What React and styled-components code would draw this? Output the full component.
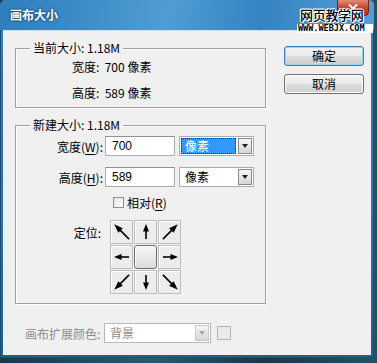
import React from "react";
import styled, { createGlobalStyle } from "styled-components";

const GlobalStyle = createGlobalStyle`
  html, body {
    margin: 0;
    padding: 0;
    background: #1c4452;
  }
  body {
    font-family: "Liberation Sans", "Noto Sans CJK SC", sans-serif;
    font-size: 12px;
    color: #000;
  }
`;

// 바깥 배경 + 창
const Screen = styled.div`
  position: relative;
  width: 377px;
  height: 363px;
  overflow: hidden;
  background: linear-gradient(90deg, #17394a, #2a5a6a 40%, #173845 70%, #25525e);
`;

const Frame = styled.div`
  width: 374px;
  height: 358px;
  box-sizing: border-box;
  padding: 0 3px 3px;
  border-radius: 6px 6px 0 0;
  background: linear-gradient(180deg, #4f9ad0 0%, #2f7dbb 8%, #2a74ad 60%, #1e5f92 100%);
  display: flex;
  flex-direction: column;
  box-shadow: inset 0 0 0 1px #1b4f7a;
`;

const TitleBar = styled.div`
  height: 29px;
  display: flex;
  align-items: center;
  padding-left: 7px;
  background: linear-gradient(100deg, #2f7dbb 0%, #4f9dd3 45%, #3583c0 70%, #559fd4 100%);
  border-radius: 5px 5px 0 0;
  margin: 0 -3px;
  padding-bottom: 1px;
`;

const Title = styled.span`
  font-family: "Noto Sans CJK SC", sans-serif;
  font-weight: 700;
  font-size: 12px;
  color: #fff;
  text-shadow: 0 0 3px #1a4c7a, 0 0 2px #1a4c7a;
  padding-left: 3px;
`;

const CloseButton = styled.div`
  position: absolute;
  left: 337px;
  top: -3px;
  width: 32px;
  height: 19px;
  border-radius: 0 0 4px 4px;
  background: linear-gradient(180deg, #e5a08f, #c9472c 55%, #b83018);
  border: 1px solid #6d2a1e;
  box-sizing: border-box;
  display: flex;
  align-items: center;
  justify-content: center;
  padding-top: 3px;
`;

const Watermark = styled.div`
  position: absolute;
  left: 297px;
  top: 7px;
  display: flex;
  flex-direction: column;
  align-items: flex-start;
`;

const WatermarkTitle = styled.span`
  font-family: "Noto Sans CJK SC", sans-serif;
  font-size: 13px;
  font-weight: 500;
  line-height: 16px;
  color: #000;
  padding-left: 3px;
  letter-spacing: -0.3px;
  text-shadow: 1px 0 0 #fff, -1px 0 0 #fff, 0 1px 0 #fff, 0 -1px 0 #fff, 1px 1px 0 #fff, -1px -1px 0 #fff;
`;

const WatermarkUrl = styled.span`
  font-family: "DejaVu Sans Mono", monospace;
  font-weight: 700;
  font-size: 8.5px;
  line-height: 9px;
  background: #fff;
  color: #000;
  padding: 0 3px 0 1px;
  width: 72px;
  margin-top: 1px;
`;

const Body = styled.div`
  flex: 1;
  background: #f0f0f0;
  display: flex;
  flex-direction: column;
  padding: 10px 0 0 12px;
  border-top: 1px solid #cfe0ee;
`;

const MainRow = styled.div`
  display: flex;
  align-items: flex-start;
`;

const LeftColumn = styled.div`
  width: 251px;
  display: flex;
  flex-direction: column;
  gap: 10px;
`;

const RightColumn = styled.div`
  margin-left: 18px;
  padding-top: 5px;
  display: flex;
  flex-direction: column;
  gap: 8px;
`;

// 그룹 박스
const Group = styled.fieldset`
  margin: 0;
  padding: 0;
  border: 1px solid #a0a0a0;
  box-shadow: 1px 1px 0 #fff, inset 1px 1px 0 #fff;
  min-width: 0;
`;

const GroupContent = styled.div`
  padding: ${(p) => p.$pad};
`;

const Legend = styled.legend`
  margin-left: 14px;
  padding: 0 3px;
  line-height: 14px;
  font-family: "Noto Sans CJK SC", sans-serif;
  font-size: 12px;
`;

const InfoLine = styled.div`
  line-height: 14px;
  white-space: pre;
  font-family: "Noto Sans CJK SC", sans-serif;
  & + & {
    margin-top: 12px;
  }
`;

const FieldRow = styled.div`
  display: flex;
  align-items: center;
  height: 20px;
  & + & {
    margin-top: 11px;
  }
`;

const FieldLabel = styled.label`
  width: ${(p) => p.$w}px;
  margin-right: ${(p) => p.$gap}px;
  padding-top: ${(p) => p.$top || 0}px;
  text-align: ${(p) => p.$align || "right"};
  color: ${(p) => (p.$disabled ? "#8d8d8d" : "#000")};
  font-family: "Noto Sans CJK SC", sans-serif;
  white-space: nowrap;
`;

const Key = styled.u`
  text-underline-offset: 2px;
`;

const TextInput = styled.div`
  width: 70px;
  height: 20px;
  box-sizing: border-box;
  border: 1px solid #abadb3;
  border-top-color: #8e9197;
  background: #fff;
  padding-left: 6px;
  line-height: 18px;
`;

const Select = styled.div`
  width: ${(p) => p.$w}px;
  height: 20px;
  margin-left: ${(p) => p.$ml}px;
  box-sizing: border-box;
  border: 1px solid ${(p) => (p.$disabled ? "#b8b8b8" : "#abadb3")};
  background: #fff;
  display: flex;
  align-items: center;
  padding: 1px;
  gap: 2px;
`;

const SelectValue = styled.div`
  flex: 1;
  height: 100%;
  box-sizing: border-box;
  padding-left: 4px;
  line-height: 16px;
  font-family: "Noto Sans CJK SC", sans-serif;
  background: ${(p) => (p.$active ? "#3399ff" : "transparent")};
  color: ${(p) => (p.$active ? "#fff" : p.$disabled ? "#8d8d8d" : "#000")};
  outline: ${(p) => (p.$active ? "1px dotted #0c2a55" : "none")};
  outline-offset: -1px;
`;

const DropButton = styled.div`
  width: 14px;
  height: 16px;
  box-sizing: border-box;
  border: 1px solid ${(p) => (p.$disabled ? "#c9c9c9" : "#8a8a8a")};
  background: linear-gradient(180deg, #f6f6f6, #d6d6d6);
  display: flex;
  align-items: center;
  justify-content: center;
  &::after {
    content: "";
    border-left: 3.5px solid transparent;
    border-right: 3.5px solid transparent;
    border-top: 4px solid ${(p) => (p.$disabled ? "#a8a8a8" : "#222")};
  }
`;

const CheckRow = styled.div`
  display: flex;
  align-items: center;
  padding-left: 97px;
  margin-top: 9px;
  height: 12px;
  font-family: "Noto Sans CJK SC", sans-serif;
`;

const CheckBox = styled.span`
  display: inline-block;
  width: ${(p) => p.$size}px;
  height: ${(p) => p.$size}px;
  box-sizing: border-box;
  border: 1px solid ${(p) => (p.$disabled ? "#b4b4b4" : "#8f8f8f")};
  background: ${(p) => (p.$disabled ? "#eaeaea" : "linear-gradient(135deg, #e4e4e4, #fff)")};
  margin-right: ${(p) => p.$mr}px;
  margin-left: ${(p) => p.$ml || 0}px;
`;

const AnchorRow = styled.div`
  display: flex;
  align-items: flex-start;
  margin-top: 12px;
`;

const AnchorGrid = styled.div`
  display: grid;
  grid-template-columns: repeat(3, 23px);
  grid-auto-rows: 24px;
  gap: 1px;
`;

const AnchorCell = styled.div`
  box-sizing: border-box;
  border: 1px solid #bdbdbd;
  box-shadow: inset 1px 1px 0 #fff;
  background: #ececec;
  display: flex;
  align-items: center;
  justify-content: center;
`;

const AnchorCenter = styled.div`
  box-sizing: border-box;
  border: 1px solid #6e6e6e;
  border-radius: 3px;
  background: linear-gradient(180deg, #f6f6f6, #dcdcdc);
  box-shadow: inset 1px 1px 0 #fff;
`;

const BottomRow = styled.div`
  display: flex;
  align-items: center;
  padding-left: 10px;
  margin-top: 19px;
`;

const DialogButton = styled.button`
  width: 80px;
  height: 20px;
  padding: 0;
  box-sizing: border-box;
  border: 1px solid ${(p) => (p.$default ? "#3c7fb1" : "#707070")};
  border-radius: 3px;
  background: linear-gradient(180deg, #f2f2f2 0%, #ebebeb 48%, #dddddd 52%, #cfcfcf 100%);
  box-shadow: inset 0 0 0 1px ${(p) => (p.$default ? "#9bd4f4" : "#fcfcfc")};
  font-family: "Noto Sans CJK SC", sans-serif;
  font-size: 12px;
  line-height: 16px;
  color: #000;
`;

const arrowAngles = [-45, 0, 45, -90, null, 90, -135, 180, 135];

// 대각선 화살표는 조금 더 길게
const Arrow = ({ angle }) => {
  const long = angle % 90 !== 0;
  return (
    <svg width="20" height="20" viewBox="0 0 20 20">
      <g transform={`rotate(${angle} 10 10)`}>
        <line x1="10" y1={long ? 20 : 17} x2="10" y2="6" stroke="#000" strokeWidth="1.6" />
        <polygon points={long ? "10,-1 6.8,8 13.2,8" : "10,2 7,9.5 13,9.5"} fill="#000" />
      </g>
    </svg>
  );
};

const CloseGlyph = () => (
  <svg width="10" height="9" viewBox="0 0 10 9">
    <path d="M1 0.5 L9 8.5 M9 0.5 L1 8.5" stroke="#fff" strokeWidth="2" />
  </svg>
);

export default function App() {
  return (
    <>
      <GlobalStyle />
      <Screen>
        <Frame>
          <TitleBar>
            <Title>画布大小</Title>
          </TitleBar>
          <Body>
            <MainRow>
              <LeftColumn>
                <Group>
                  <Legend>当前大小: 1.18M</Legend>
                  <GroupContent $pad="5px 0 7px 56px">
                    <InfoLine>宽度:  700 像素</InfoLine>
                    <InfoLine>高度:  589 像素</InfoLine>
                  </GroupContent>
                </Group>

                <Group>
                  <Legend>新建大小: 1.18M</Legend>
                  <GroupContent $pad="4px 0 9px 0">
                    <FieldRow>
                      <FieldLabel $w={87} $gap={2}>
                        宽度(<Key>W</Key>):
                      </FieldLabel>
                      <TextInput>700</TextInput>
                      <Select $w={75} $ml={4}>
                        <SelectValue $active>像素</SelectValue>
                        <DropButton />
                      </Select>
                    </FieldRow>
                    <FieldRow>
                      <FieldLabel $w={87} $gap={2}>
                        高度(<Key>H</Key>):
                      </FieldLabel>
                      <TextInput>589</TextInput>
                      <Select $w={75} $ml={4}>
                        <SelectValue>像素</SelectValue>
                        <DropButton />
                      </Select>
                    </FieldRow>
                    <CheckRow>
                      <CheckBox $size={11} $mr={3} />
                      相对(<Key>R</Key>)
                    </CheckRow>
                    <AnchorRow>
                      <FieldLabel $w={85} $gap={9} $top={4}>
                        定位:
                      </FieldLabel>
                      <AnchorGrid>
                        {arrowAngles.map((a, i) =>
                          a === null ? (
                            <AnchorCenter key={i} />
                          ) : (
                            <AnchorCell key={i}>
                              <Arrow angle={a} />
                            </AnchorCell>
                          )
                        )}
                      </AnchorGrid>
                    </AnchorRow>
                  </GroupContent>
                </Group>
              </LeftColumn>

              <RightColumn>
                <DialogButton $default>确定</DialogButton>
                <DialogButton>取消</DialogButton>
              </RightColumn>
            </MainRow>

            <BottomRow>
              <FieldLabel $w={76} $gap={3} $align="left" $disabled>
                画布扩展颜色:
              </FieldLabel>
              <Select $w={107} $ml={0} $disabled>
                <SelectValue $disabled>背景</SelectValue>
                <DropButton $disabled />
              </Select>
              <CheckBox $size={14} $mr={0} $ml={6} $disabled />
            </BottomRow>
          </Body>
        </Frame>
        <CloseButton>
          <CloseGlyph />
        </CloseButton>
        <Watermark>
          <WatermarkTitle>网页教学网</WatermarkTitle>
          <WatermarkUrl>WWW.WEBJX.COM</WatermarkUrl>
        </Watermark>
      </Screen>
    </>
  );
}
